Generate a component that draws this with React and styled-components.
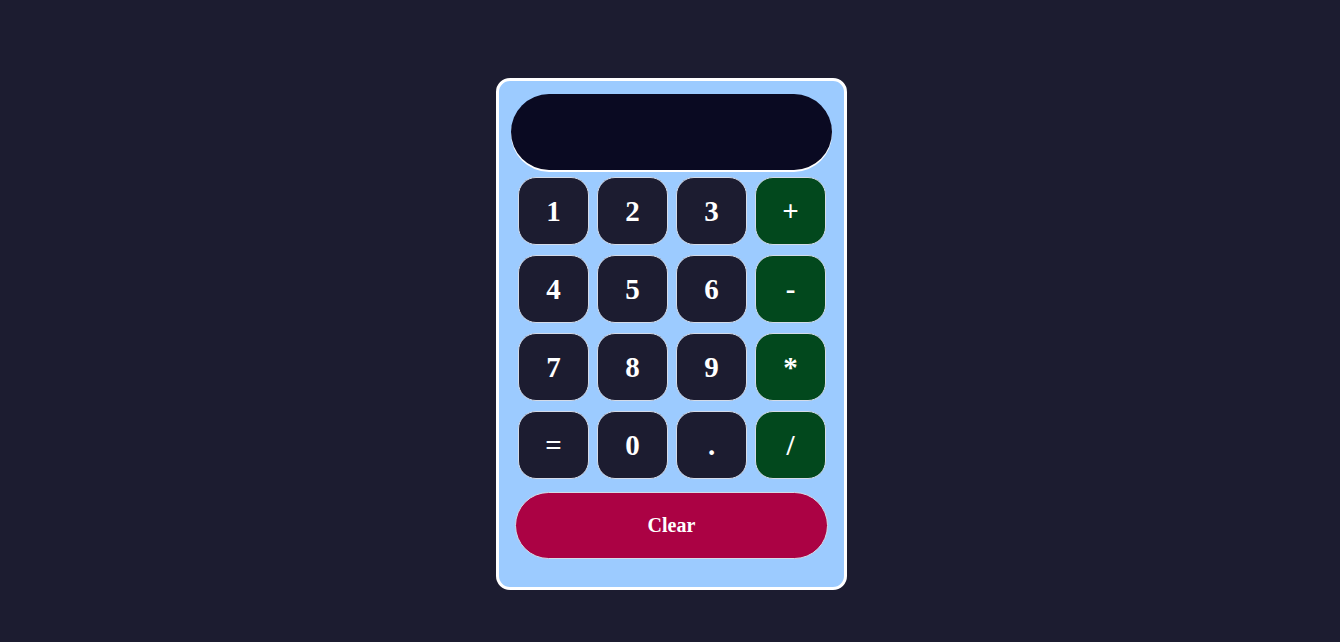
import React, { useState } from "react";
import styled, { createGlobalStyle } from "styled-components";

const GlobalStyle = createGlobalStyle`
  html, body {
    margin: 0;
    padding: 0;
    background: #1c1c30;
    font-family: "Liberation Serif", "Times New Roman", serif;
  }
`;

const keys = [
  ["1", "num"], ["2", "num"], ["3", "num"], ["+", "op"],
  ["4", "num"], ["5", "num"], ["6", "num"], ["-", "op"],
  ["7", "num"], ["8", "num"], ["9", "num"], ["*", "op"],
  ["=", "num"], ["0", "num"], [".", "num"], ["/", "op"],
];

function App() {
  const [value, setValue] = useState("");

  const press = (k) => {
    if (k === "=") {
      try {
        // eslint-disable-next-line no-new-func
        setValue(String(Function(`return (${value})`)()));
      } catch (e) {
        setValue("Error");
      }
      return;
    }
    setValue(value + k);
  };

  return (
    <Page>
      <GlobalStyle />
      <Calculator>
        <Display value={value} readOnly />
        <Keypad>
          {keys.map(([k, kind]) => (
            <Key key={k} $kind={kind} onClick={() => press(k)}>
              {k}
            </Key>
          ))}
        </Keypad>
        <ClearButton onClick={() => setValue("")}>Clear</ClearButton>
      </Calculator>
    </Page>
  );
}

const Page = styled.div`
  min-height: 642px;
  display: flex;
  align-items: flex-start;
  padding-top: 78px;
  padding-left: 496px;
  box-sizing: border-box;
`;

const Calculator = styled.div`
  width: 351px;
  box-sizing: border-box;
  background: #9ccbff;
  border: 3px solid #ffffff;
  border-radius: 14px;
  padding: 13px 11px 28px 12px;
  display: flex;
  flex-direction: column;
  align-items: flex-start;
`;

const Display = styled.input`
  width: 321px;
  height: 76px;
  box-sizing: border-box;
  border: none;
  outline: none;
  border-radius: 38px;
  background: #0a0a22;
  box-shadow: 0 2px 0 #ffffff;
  color: #ffffff;
  font-family: inherit;
  font-size: 32px;
  text-align: right;
  padding: 0 28px;
`;

const Keypad = styled.div`
  display: grid;
  grid-template-columns: repeat(4, 71px);
  grid-auto-rows: 68px;
  column-gap: 8px;
  row-gap: 10px;
  margin-top: 7px;
  margin-left: 7px;
`;

const Key = styled.button`
  box-sizing: border-box;
  border: 1px solid #d4dbe8;
  border-radius: 18px;
  background: ${(p) => (p.$kind === "op" ? "#02481d" : "#1c1c30")};
  color: #ffffff;
  font-family: inherit;
  font-weight: bold;
  font-size: 29px;
  cursor: pointer;
  padding: 0;
`;

const ClearButton = styled.button`
  width: 313px;
  height: 67px;
  margin-top: 13px;
  margin-left: 4px;
  box-sizing: border-box;
  border: 1px solid #d4dbe8;
  border-radius: 34px;
  background: #ab0244;
  color: #ffffff;
  font-family: inherit;
  font-weight: bold;
  font-size: 20px;
  cursor: pointer;
`;

export default App;
